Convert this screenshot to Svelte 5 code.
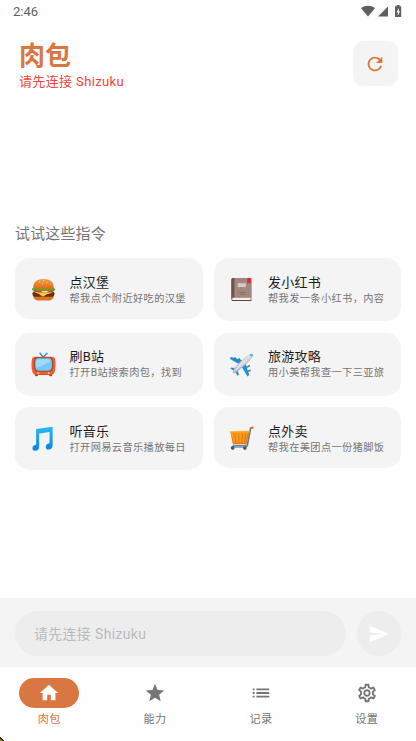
<script>
	const commands = [
		{ icon: 'burger', title: '点汉堡', desc: '帮我点个附近好吃的汉堡', short: true },
		{ icon: 'book', title: '发小红书', desc: '帮我发一条小红书，内容' },
		{ icon: 'tv', title: '刷B站', desc: '打开B站搜索肉包，找到' },
		{ icon: 'plane', title: '旅游攻略', desc: '用小美帮我查一下三亚旅' },
		{ icon: 'music', title: '听音乐', desc: '打开网易云音乐播放每日' },
		{ icon: 'cart', title: '点外卖', desc: '帮我在美团点一份猪脚饭', short: true }
	];

	const tabs = [
		{ label: '肉包', path: 'M10 20v-6h4v6h5v-8h3L12 3 2 12h3v8z' },
		{
			label: '能力',
			path: 'M12 17.27L18.18 21l-1.64-7.03L22 9.24l-7.19-.61L12 2 9.19 8.63 2 9.24l5.46 4.73L5.82 21z'
		},
		{
			label: '记录',
			path: 'M3 13h2v-2H3v2zm0 4h2v-2H3v2zm0-8h2V7H3v2zm4 4h14v-2H7v2zm0 4h14v-2H7v2zM7 7v2h14V7H7z'
		},
		{
			label: '设置',
			path: 'M19.43 12.98c.04-.32.07-.64.07-.98s-.03-.66-.07-.98l2.11-1.65c.19-.15.24-.42.12-.64l-2-3.46c-.09-.16-.26-.25-.44-.25-.06 0-.12.01-.17.03l-2.49 1c-.52-.4-1.08-.73-1.69-.98l-.38-2.65C14.46 2.18 14.25 2 14 2h-4c-.25 0-.46.18-.49.42l-.38 2.65c-.61.25-1.17.59-1.69.98l-2.49-1c-.06-.02-.12-.03-.18-.03-.17 0-.34.09-.43.25l-2 3.46c-.13.22-.07.49.12.64l2.11 1.65c-.04.32-.07.65-.07.98s.03.66.07.98l-2.11 1.65c-.19.15-.24.42-.12.64l2 3.46c.09.16.26.25.44.25.06 0 .12-.01.17-.03l2.49-1c.52.4 1.08.73 1.69.98l.38 2.65c.03.24.24.42.49.42h4c.25 0 .46-.18.49-.42l.38-2.65c.61-.25 1.17-.59 1.69-.98l2.49 1c.06.02.12.03.18.03.17 0 .34-.09.43-.25l2-3.46c.12-.22.07-.49-.12-.64l-2.11-1.65zm-1.98-1.71c.04.31.05.52.05.73s-.02.43-.05.73l-.14 1.13.89.7 1.08.84-.7 1.21-1.27-.51-1.04-.42-.9.68c-.43.32-.84.56-1.25.73l-1.06.43-.16 1.13-.2 1.35h-1.4l-.19-1.35-.16-1.13-1.06-.43c-.43-.18-.83-.41-1.23-.71l-.91-.7-1.06.43-1.27.51-.7-1.21 1.08-.84.89-.7-.14-1.13c-.03-.31-.05-.54-.05-.74s.02-.43.05-.73l.14-1.13-.89-.7-1.08-.84.7-1.21 1.27.51 1.04.42.9-.68c.43-.32.84-.56 1.25-.73l1.06-.43.16-1.13.2-1.35h1.39l.19 1.35.16 1.13 1.06.43c.43.18.83.41 1.23.71l.91.7 1.06-.43 1.27-.51.7 1.21-1.07.85-.89.7.14 1.13zM12 8c-2.21 0-4 1.79-4 4s1.79 4 4 4 4-1.79 4-4-1.79-4-4-4zm0 6c-1.1 0-2-.9-2-2s.9-2 2-2 2 .9 2 2-.9 2-2 2z'
		}
	];

	let active = $state(0);
</script>

<div class="screen">
	<div class="status">
		<span>2:46</span>
		<svg width="44" height="14" viewBox="0 0 44 14" fill="#5f5f5f">
			<path d="M1 3.2C5 0 11 0 15 3.200L8 11.500z" />
			<path d="M28 1.500V11.500H18z" />
			<path d="M36.600 1.200V0h3v1.200h1.600v10.800h-6.200v-10.800z" />
			<path d="M38.800 3L36.500 7.300h1.300v3.400l2.200-4.400h-1.200z" fill="#fff" />
		</svg>
	</div>

	<header>
		<div>
			<h1>肉包</h1>
			<p>请先连接 Shizuku</p>
		</div>
		<button class="refresh" aria-label="刷新">
			<svg width="22" height="22" viewBox="0 0 24 24" fill="#d97742">
				<path d="M17.65 6.35C16.2 4.9 14.21 4 12 4c-4.42 0-7.99 3.58-7.99 8s3.57 8 7.99 8c3.73 0 6.84-2.55 7.73-6h-2.08c-.82 2.33-3.04 4-5.65 4-3.31 0-6-2.69-6-6s2.69-6 6-6c1.66 0 3.14.69 4.22 1.78L13 11h7V4l-2.35 2.35z" />
			</svg>
		</button>
	</header>

	<main>
		<h2>试试这些指令</h2>
		<div class="grid">
			{#each commands as cmd (cmd.icon)}
				<div class="card" class:short={cmd.short}>
					<svg class="emoji" viewBox="0 0 26 26">
						{#if cmd.icon === 'burger'}
							<defs>
								<linearGradient id="bun" x1="0" y1="0" x2="0" y2="1">
									<stop offset="0" stop-color="#f6a03a" />
									<stop offset="1" stop-color="#d56a1c" />
								</linearGradient>
							</defs>
							<path d="M2 18h22c0 5-3 6.5-6 6.5H8c-3 0-6-1.500-6-6.500z" fill="#dd7424" />
							<path d="M1.500 17.500c0-2 1-2.500 3-2.500h17c2 0 3 .6 3 2.500s-1.500 3-3 3h-17c-2 0-3-1-3-3z" fill="#653018" />
							<path d="M3 15.500h20l-2.500 1.500-4 1-4 2.500L8 17.500z" fill="#fbc746" />
							<path d="M3 13h20v2.300c-2 1.500-4 .7-6 .7l-5 .3-9-1z" fill="#e33b24" />
							<path d="M10 14.200h9l-3 2h-4z" fill="#ffe28a" />
							<path d="M.8 12.500c1-1.300 3-1.200 5-1.200h15c2 0 4 .2 4.400 1.500.3 1.500-1.500 2-3 1.500-2-.8-3 .5-5 0-2-.7-3 .5-5 0s-3 .8-5 .2c-2-.6-6 1-6.400-2z" fill="#5ba329" />
							<path d="M2.200 11.800C2.200 5 6 2 13 2s10.800 3 10.800 9.800c-5 1.200-17 1.200-21.600 0z" fill="url(#bun)" />
							<g fill="#ffdda0">
								<circle cx="9" cy="5" r=".6" /><circle cx="13" cy="4" r=".6" /><circle cx="16.500" cy="6" r=".6" />
								<circle cx="12" cy="7" r=".6" /><circle cx="20" cy="8" r=".5" />
							</g>
						{:else if cmd.icon === 'book'}
							<path d="M4.500 1h18.800v23.500H4c-1 0-1.600-.8-1.600-1.700V3c0-1.300.8-2 2.100-2z" fill="#8b6b61" />
							<path d="M5.500 1h17.800v20.500H5.500z" fill="#a1877e" />
							<path d="M2.500 3c0-1.300.7-2 2-2h1v21h-3z" fill="#755248" />
							<path d="M3.500 21.600h19v2.300h-19z" fill="#f3f0ed" />
							<path d="M2.400 24h20.900v.9H3.500z" fill="#654238" />
							<path d="M9 6.500h8.500v4H9z" fill="#d5ccc8" />
							<path d="M10 16h8M11 18h6" stroke="#856a60" stroke-width=".8" />
							<path d="M19 1h3.500v6l-1.700-1.300L19 7z" fill="#f31937" />
						{:else if cmd.icon === 'tv'}
							<path d="M9.700 1.500l3 4 3.600-4" fill="none" stroke="#52849b" stroke-width="1.500" />
							<circle cx="9.600" cy="1.500" r="1" fill="#31a9ed" /><circle cx="16.400" cy="1.500" r="1" fill="#31a9ed" />
							<path d="M4 21h18v3.500c0 1-3 1-3.500-.6h-11C7 25.500 4 25.500 4 24.500z" fill="#ca351c" />
							<path d="M4 5h18c3 0 3.500 3 3.500 8s-1 10.500-3.500 10.500H4C1.500 23.500.5 18 .5 13S1 5 4 5z" fill="#f05a35" />
							<path d="M6.500 5.500h13c3 0 3.500 2 3.500 7s-1 8-4 8H7c-3 0-4-3-4-8s.5-7 3.500-7z" fill="#a74433" />
							<path d="M8 6.500h10c3 0 3.800 1.500 3.800 6s-.8 7-3.800 7H8c-3 0-3.800-2.500-3.800-7s.8-6 3.800-6z" fill="#74c9f3" />
							<path d="M8 7.500h9c2 0 2.800.6 3 3L7 16c-2 0-2-6-1-7.500z" fill="#9bdbf7" />
							<circle cx="7.500" cy="22" r="1.200" fill="#ffc438" /><circle cx="18.500" cy="22" r="1.200" fill="#ffc438" />
						{:else if cmd.icon === 'plane'}
							<path d="M16 9L2 5.200.8 7 11 13zM17 11l4 13-1.800 1.500L13 15zM8 17l-5.800-.8L1.500 17.500 6 20zM9 18l1.200 6-1.300.8L6 20z" fill="#1a91df" />
							<path d="M6 5.500l1.500 3.300M10.500 6.500l1 3M21.800 14l-3.500 2M22.500 19l-3 1" stroke="#5c7887" stroke-width="1.600" />
							<path d="M22.500 2.200c1.700-.7 2.800.3 2 2C23 8 16 15 8.500 20.500c-1.500 1-4 2-4.500 1.500s.3-3 1.300-4.500C10 11 18 4 22.500 2.200z" fill="#b9bcbf" />
							<path d="M22 2.400c1.700-.7 2.600 0 2 1.500-1 2.500-8 9-15 14l-3.500 1.700C10 12 18 4 22 2.400z" fill="#dcdfe1" />
							<path d="M21.200 2.900l3 2.600.6-1.500c.6-1.500-.7-2.700-2.300-1.900z" fill="#54b8e8" />
						{:else if cmd.icon === 'music'}
							<defs>
								<linearGradient id="note" x1="0" y1="0" x2="0" y2="1">
									<stop offset="0" stop-color="#28baf5" />
									<stop offset="1" stop-color="#0b83dc" />
								</linearGradient>
							</defs>
							<path d="M5.300 3.200L22.500.8v19.400c0 2.700-2 4.300-4.200 4.300s-3-1.200-3-2.700c0-2.300 2-3.700 4-3.800V6.200L8.500 7.900v13.600c0 2.700-1.700 4.300-4 4.300-1.800 0-3-1-3-2.700 0-2.200 1.700-3.700 3.800-3.700z" fill="url(#note)" />
						{:else}
							<path d="M25.200 1.500l-2.700.8L19 20.500H4" fill="none" stroke="#67808b" stroke-width="1.800" />
							<path d="M1.500 6.500L4 18.700h14.500l2.700-13z" fill="#e87912" />
							<path d="M2 7.500l17.800-.5-2.500 10.500H5z" fill="#ff9918" />
							<path d="M6 8l1.200 10M10 8l.5 10M14 8l-.5 10M17.500 8l-1.300 10" stroke="#df700c" stroke-width=".9" />
							<path d="M.7 5.500L21.500 5l-.3 2H1z" fill="#ffad28" />
							<path d="M5 20l-2 2h15l1-2" fill="none" stroke="#78909b" stroke-width="1.400" />
							<circle cx="3.800" cy="23" r="1.900" fill="#3e5865" /><circle cx="16.500" cy="23" r="1.900" fill="#3e5865" />
							<path d="M22.500 2.200l2.800-.7" stroke="#ee7616" stroke-width="2" />
						{/if}
					</svg>
					<div class="text">
						<div class="title">{cmd.title}</div>
						<div class="desc">{cmd.desc}</div>
					</div>
				</div>
			{/each}
		</div>
	</main>

	<div class="composer">
		<div class="input">请先连接 Shizuku</div>
		<button class="send" aria-label="发送">
			<svg width="22" height="22" viewBox="0 0 24 24" fill="#fff">
				<path d="M2.010 21L23 12 2.010 3 2 10l15 2-15 2z" />
			</svg>
		</button>
	</div>

	<nav>
		{#each tabs as tab, i (tab.label)}
			<button class="tab" class:active={active === i} onclick={() => (active = i)}>
				<span class="pill">
					<svg width="22" height="22" viewBox="0 0 24 24" fill="currentColor"><path d={tab.path} /></svg>
				</span>
				<span class="label">{tab.label}</span>
			</button>
		{/each}
	</nav>
	<svg class="corner" width="4" height="4" viewBox="0 0 4 4">
		<path d="M0 0h1v1h1v1h1v1h1v1H0z" fill="#242600" />
		<path d="M0 2h1v1h1v1H0z" fill="#8b9500" />
	</svg>
</div>

<style>
	:global(body) {
		margin: 0;
		background: #fff;
	}
	.screen {
		position: relative;
		width: 416px;
		height: 741px;
		display: flex;
		flex-direction: column;
		overflow: hidden;
		background: #fefefe;
		font-family: Roboto, 'Noto Sans CJK SC', sans-serif;
		color: #1c1c1c;
	}
	h1,
	h2,
	p {
		margin: 0;
	}
	button {
		border: 0;
		padding: 0;
		font: inherit;
	}
	svg {
		display: block;
		flex: none;
	}
	.status {
		height: 24px;
		box-sizing: border-box;
		padding: 5px 12px 0 13px;
		display: flex;
		justify-content: space-between;
		font-size: 13px;
		line-height: 14px;
		color: #5f5f5f;
	}
	header {
		height: 79px;
		box-sizing: border-box;
		padding: 17px 18.5px 0 19px;
		display: flex;
		justify-content: space-between;
		align-items: flex-start;
	}
	h1 {
		font-size: 26px;
		line-height: 30px;
		font-weight: 700;
		color: #d97742;
	}
	header p {
		margin-top: 1px;
		font-size: 13px;
		line-height: 19px;
		letter-spacing: 0.37px;
		color: #f44336;
	}
	.refresh {
		width: 45px;
		height: 45px;
		border-radius: 11px;
		background: #f4f4f4;
		display: grid;
		place-items: center;
	}
	main {
		flex: 1;
		padding: 120px 15px 0;
	}
	h2 {
		font-size: 14.9px;
		line-height: 22px;
		letter-spacing: 0.25px;
		font-weight: 400;
		color: #757575;
	}
	.grid {
		margin-top: 13px;
		display: grid;
		grid-template-columns: 1fr 1fr;
		column-gap: 11px;
		row-gap: 11px;
		align-items: start;
		grid-auto-rows: 63.5px;
	}
	.card {
		height: 63px;
		box-sizing: border-box;
		padding: 15px;
		border-radius: 15px;
		background: #f4f4f4;
		display: flex;
		align-items: center;
	}
	.card.short {
		height: 61px;
	}
	.emoji {
		width: 25px;
		height: 25px;
		margin-left: 0.5px;
	}
	.card.short .emoji {
		margin-top: 1px;
	}
	.text {
		margin-left: 14px;
		white-space: nowrap;
	}
	.card.short .text {
		margin-top: 2px;
	}
	.title {
		font-size: 13px;
		line-height: 17px;
		letter-spacing: 0.23px;
	}
	.desc {
		font-size: 10.2px;
		line-height: 15px;
		letter-spacing: 0.4px;
		color: #757575;
	}
	.composer {
		height: 69px;
		box-sizing: border-box;
		padding: 2px 15px 0;
		background: #f4f4f4;
		display: flex;
		align-items: center;
		gap: 11px;
	}
	.input {
		flex: 1;
		height: 45px;
		line-height: 46px;
		padding-left: 19px;
		border-radius: 23px;
		background: #ededed;
		color: #bababa;
		font-size: 13.9px;
		letter-spacing: 0.4px;
	}
	.send {
		width: 44.5px;
		height: 44.5px;
		border-radius: 50%;
		background: #ededed;
		display: grid;
		place-items: center;
	}
	nav {
		height: 74px;
		display: flex;
		gap: 7.5px;
	}
	.tab {
		flex: 1;
		padding-top: 11px;
		background: none;
		color: #757575;
		display: flex;
		flex-direction: column;
		align-items: center;
	}
	.pill {
		width: 60px;
		height: 30px;
		border-radius: 15px;
		display: grid;
		place-items: center;
	}
	.label {
		margin-top: 4px;
		font-size: 11.1px;
		line-height: 16px;
		letter-spacing: 0.46px;
	}
	.active .pill {
		background: #d97742;
		color: #fff;
	}
	.active .label {
		color: #d97742;
	}
	.corner {
		position: absolute;
		left: 0;
		bottom: 0;
	}
</style>
